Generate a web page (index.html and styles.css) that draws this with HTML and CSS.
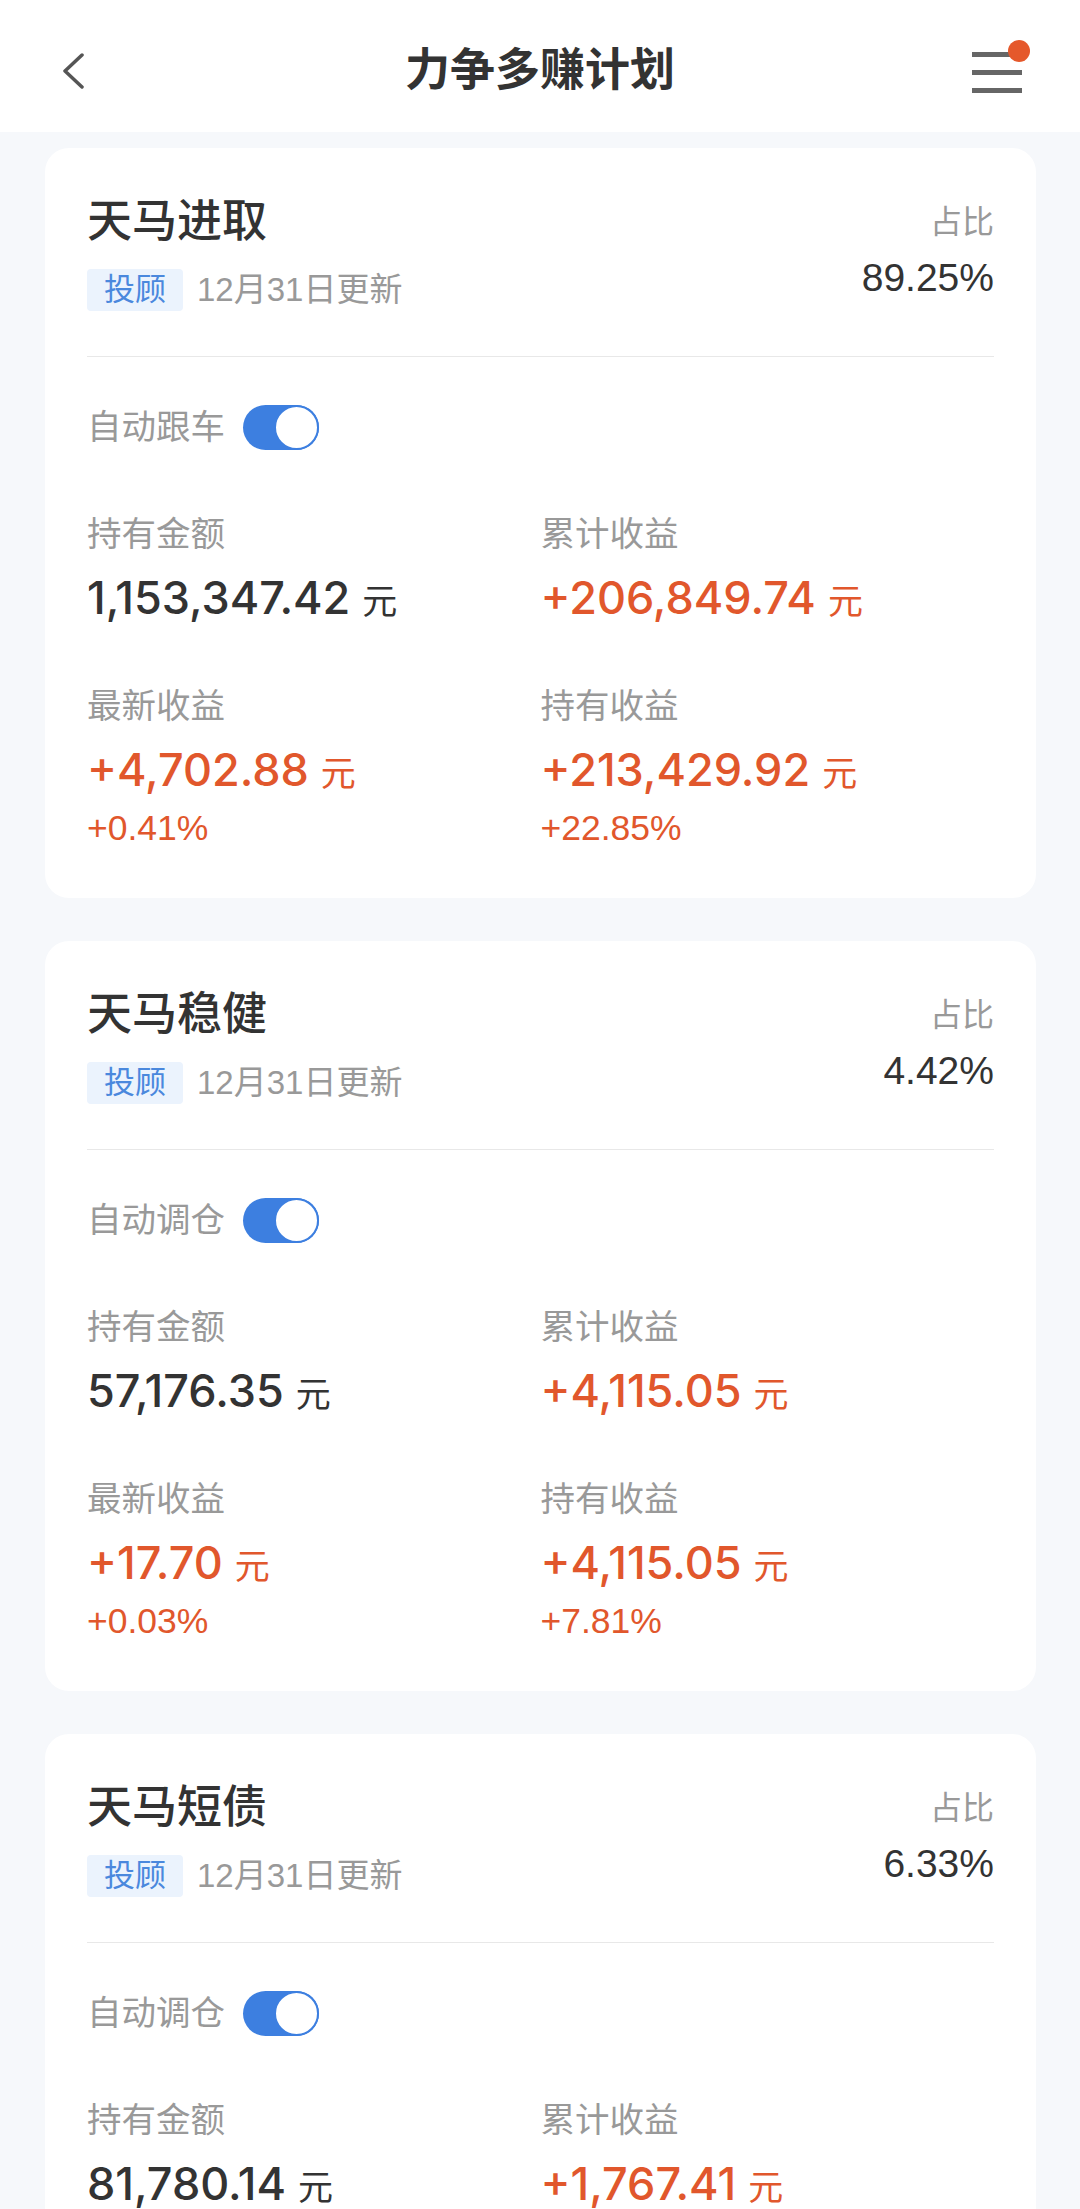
FILE: index.html
```html
<!DOCTYPE html>
<html lang="zh-CN">
<head>
  <meta charset="UTF-8" />
  <meta name="viewport" content="width=device-width, initial-scale=1.0" />
  <title>力争多赚计划</title>
  <link rel="stylesheet" href="styles.css">
</head>
<body>
  <div class="topbar">
    <svg class="back" width="30" height="40" viewBox="0 0 30 40">
      <polyline points="22,6 5,22 22,38" fill="none" stroke="#555" stroke-width="3.5" stroke-linecap="round" stroke-linejoin="round"/>
    </svg>
    <div class="page-title">力争多赚计划</div>
    <div class="menu">
      <span class="line"></span>
      <span class="line"></span>
      <span class="line"></span>
      <span class="dot"></span>
    </div>
  </div>

  <div class="list">
    <div class="card">
      <div class="card-head">
        <div>
          <div class="name">天马进取</div>
          <div class="meta"><span class="tag">投顾</span><span class="date">12月31日更新</span></div>
        </div>
        <div class="ratio">
          <div class="ratio-label">占比</div>
          <div class="ratio-value">89.25%</div>
        </div>
      </div>
      <div class="switch-row">
        <span class="switch-label">自动跟车</span>
        <span class="switch"><span class="knob"></span></span>
      </div>
      <div class="stats">
        <div class="stat">
          <div class="label">持有金额</div>
          <div class="value">1,153,347.42<span class="unit">元</span></div>
        </div>
        <div class="stat">
          <div class="label">累计收益</div>
          <div class="value up">+206,849.74<span class="unit">元</span></div>
        </div>
        <div class="stat">
          <div class="label">最新收益</div>
          <div class="value up">+4,702.88<span class="unit">元</span></div>
          <div class="pct">+0.41%</div>
        </div>
        <div class="stat">
          <div class="label">持有收益</div>
          <div class="value up">+213,429.92<span class="unit">元</span></div>
          <div class="pct">+22.85%</div>
        </div>
      </div>
    </div>

    <div class="card">
      <div class="card-head">
        <div>
          <div class="name">天马稳健</div>
          <div class="meta"><span class="tag">投顾</span><span class="date">12月31日更新</span></div>
        </div>
        <div class="ratio">
          <div class="ratio-label">占比</div>
          <div class="ratio-value">4.42%</div>
        </div>
      </div>
      <div class="switch-row">
        <span class="switch-label">自动调仓</span>
        <span class="switch"><span class="knob"></span></span>
      </div>
      <div class="stats">
        <div class="stat">
          <div class="label">持有金额</div>
          <div class="value">57,176.35<span class="unit">元</span></div>
        </div>
        <div class="stat">
          <div class="label">累计收益</div>
          <div class="value up">+4,115.05<span class="unit">元</span></div>
        </div>
        <div class="stat">
          <div class="label">最新收益</div>
          <div class="value up">+17.70<span class="unit">元</span></div>
          <div class="pct">+0.03%</div>
        </div>
        <div class="stat">
          <div class="label">持有收益</div>
          <div class="value up">+4,115.05<span class="unit">元</span></div>
          <div class="pct">+7.81%</div>
        </div>
      </div>
    </div>

    <div class="card">
      <div class="card-head">
        <div>
          <div class="name">天马短债</div>
          <div class="meta"><span class="tag">投顾</span><span class="date">12月31日更新</span></div>
        </div>
        <div class="ratio">
          <div class="ratio-label">占比</div>
          <div class="ratio-value">6.33%</div>
        </div>
      </div>
      <div class="switch-row">
        <span class="switch-label">自动调仓</span>
        <span class="switch"><span class="knob"></span></span>
      </div>
      <div class="stats">
        <div class="stat">
          <div class="label">持有金额</div>
          <div class="value">81,780.14<span class="unit">元</span></div>
        </div>
        <div class="stat">
          <div class="label">累计收益</div>
          <div class="value up">+1,767.41<span class="unit">元</span></div>
        </div>
      </div>
    </div>
  </div>
</body>
</html>
```

FILE: styles.css
```css
body {
  margin: 0;
  background: #f6f8fb;
  color: #333;
  font-family: "Liberation Sans", "Noto Sans CJK SC", sans-serif;
}
.topbar {
  height: 132px;
  background: #fff;
  display: flex;
  align-items: center;
  justify-content: space-between;
  padding: 0 58px 0 60px;
  position: relative;
}
.back {
  display: block;
  margin-top: 6px;
}
.page-title {
  position: absolute;
  left: 0;
  right: 0;
  text-align: center;
  font-size: 45px;
  font-weight: bold;
  pointer-events: none;
}
.menu {
  width: 50px;
  margin-top: 12px;
  display: flex;
  flex-direction: column;
  gap: 13px;
  position: relative;
}
.menu .line {
  display: block;
  height: 5px;
  background: #666;
}
.menu .dot {
  position: absolute;
  width: 22px;
  height: 22px;
  border-radius: 50%;
  background: #e5582b;
  right: -8px;
  top: -12px;
}
.list {
  padding: 16px 44px 0 45px;
  display: flex;
  flex-direction: column;
  gap: 43px;
}
.card {
  background: #fff;
  border-radius: 24px;
  padding: 46px 42px 49px;
}
.card-head {
  display: flex;
  justify-content: space-between;
  padding-bottom: 45px;
  border-bottom: 1px solid #e8e8e8;
}
.name {
  font-size: 45px;
  line-height: 56px;
  font-weight: 500;
}
.meta {
  margin-top: 19px;
  display: flex;
  align-items: center;
}
.tag {
  background: #ebf3fd;
  color: #4a88dd;
  font-size: 31px;
  line-height: 42px;
  padding: 0 17px;
  border-radius: 4px;
}
.date {
  margin-left: 14px;
  color: #999;
  font-size: 33px;
  line-height: 42px;
}
.ratio {
  text-align: right;
}
.ratio-label {
  color: #999;
  font-size: 32px;
  line-height: 56px;
}
.ratio-value {
  margin-top: 6px;
  font-size: 39px;
  line-height: 44px;
}
.switch-row {
  margin-top: 48px;
  display: flex;
  align-items: center;
  gap: 18px;
}
.switch-label {
  color: #999;
  font-size: 34.5px;
  line-height: 45px;
}
.switch {
  width: 76px;
  height: 45px;
  border-radius: 23px;
  background: #3d7fe0;
  position: relative;
}
.knob {
  position: absolute;
  right: 0;
  top: 0;
  width: 41px;
  height: 41px;
  border: 2px solid #3d7fe0;
  border-radius: 50%;
  background: #fff;
}
.stats {
  margin-top: 62px;
  display: grid;
  grid-template-columns: 1fr 1fr;
  row-gap: 57px;
}
.label {
  color: #999;
  font-size: 34.5px;
  line-height: 44px;
}
.value {
  margin-top: 14px;
  font-family: Inter, "Liberation Sans", "Noto Sans CJK SC", sans-serif;
  font-size: 45px;
  line-height: 56px;
  font-weight: 500;
}
.value.up {
  color: #e1572c;
}
.unit {
  font-family: "Noto Sans CJK SC", sans-serif;
  font-size: 35px;
  font-weight: normal;
  margin-left: 12px;
}
.pct {
  margin-top: 8px;
  color: #e1572c;
  font-size: 35.5px;
  line-height: 42px;
}
```
